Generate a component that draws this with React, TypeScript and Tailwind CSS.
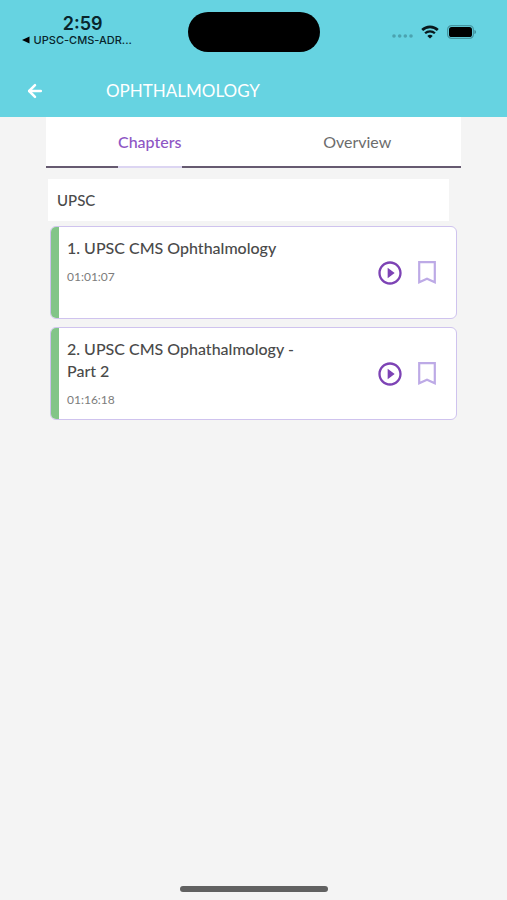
import React, { useState } from "react";
import { ArrowLeft } from "lucide-react";
import { MdPlayCircleOutline } from "react-icons/md";
import clsx from "clsx";

type Chapter = {
  id: number;
  title: string;
  duration: string;
};

const chapters: Chapter[] = [
  { id: 1, title: "UPSC CMS Ophthalmology", duration: "01:01:07" },
  { id: 2, title: "UPSC CMS Ophathalmology - Part 2", duration: "01:16:18" },
];

const tabs = ["Chapters", "Overview"];

const WifiIcon = () => (
  <svg viewBox="0 0 18 14" className="h-[14px] w-[18px]" fill="none">
    <path d="M1.2 5a11.200 11.200 0 0 1 15.600 0" stroke="#08191d" strokeWidth="2.7" />
    <path d="M4.1 8.300a7 7 0 0 1 9.800 0" stroke="#08191d" strokeWidth="2.3" />
    <path d="M9 13.6 6.300 11a3.900 3.900 0 0 1 5.400 0z" fill="#08191d" />
  </svg>
);

const BatteryIcon = () => (
  <svg viewBox="0 0 29 14" className="h-[14px] w-[29px]" fill="none">
    <rect x="0.6" y="0.6" width="25.800" height="12.8" rx="4" stroke="#4596a2" strokeWidth="1.2" />
    <rect x="2" y="2" width="23" height="10" rx="2.6" fill="#000" />
    <path d="M27.500 5v4c1-.3 1.300-1.100 1.300-2s-.3-1.700-1.300-2z" fill="#367f8a" />
  </svg>
);

const BookmarkIcon = () => (
  <svg viewBox="0 0 18 23" className="h-[23px] w-[18px]" fill="none">
    <path
      d="M1.200 1.200h15.600v20L9 17.800l-7.800 3.400z"
      stroke="#bdaae6"
      strokeWidth="2.2"
    />
  </svg>
);

const StatusBar = () => (
  <div className="grid h-16 grid-cols-[1fr_132px_1fr] pt-3">
    <div className="flex flex-col items-center pr-[34px] font-[Inter,sans-serif] text-[#08252c]">
      <span className="pl-3 text-[18px] leading-6 font-semibold">2:59</span>
      <a href="#" className="flex items-center gap-1 text-[11px] leading-2 font-medium">
        <svg viewBox="0 0 8 8" className="h-2 w-2" fill="#000">
          <path d="M0 4 7.500.5v7z" />
        </svg>
        UPSC-CMS-ADR...
      </a>
    </div>
    <div className="h-10 rounded-full bg-black" />
    <div className="flex h-10 items-center justify-end gap-2 pr-[31px]">
      <svg viewBox="0 0 21 4" className="mt-2 h-1 w-[21px]" fill="#4ba3b0">
        <circle cx="2" cy="2" r="1.800" />
        <circle cx="7.700" cy="2" r="1.800" />
        <circle cx="13.300" cy="2" r="1.800" />
        <circle cx="19" cy="2" r="1.800" />
      </svg>
      <WifiIcon />
      <BatteryIcon />
    </div>
  </div>
);

const ChapterCard = ({ id, title, duration }: Chapter) => {
  const [saved, setSaved] = useState(false);

  return (
    <li className="flex min-h-[93px] overflow-hidden rounded-md border border-[#cfc3ee] bg-white">
      <div className="w-2 shrink-0 bg-[#82c588]" />
      <div className="flex flex-1 flex-col gap-2 pt-[10px] pl-2">
        <h3 className="max-w-[240px] text-[16px] leading-[22px] font-medium text-[#4a4a4a]">
          {`${id}. ${title}`}
        </h3>
        <div className="text-[12px] leading-5 text-[#7c7c7c]">{duration}</div>
      </div>
      <div className="flex items-center gap-[14px] pr-5">
        <button type="button" aria-label={`Play ${title}`}>
          <MdPlayCircleOutline className="h-7 w-7 text-[#7d43b5]" />
        </button>
        <button
          type="button"
          aria-label={`Bookmark ${title}`}
          aria-pressed={saved}
          onClick={() => setSaved(!saved)}
        >
          <BookmarkIcon />
        </button>
      </div>
    </li>
  );
};

const App = () => {
  const [activeTab, setActiveTab] = useState("Chapters");

  return (
    <div className="flex min-h-screen flex-col bg-[#f4f4f4] font-[Lato,sans-serif]">
      <header className="bg-[#66d3e1]">
        <StatusBar />
        <div className="flex h-[53px] items-center gap-[61px] px-[25px] text-white">
          <button type="button" aria-label="Back">
            <ArrowLeft className="h-5 w-5" strokeWidth={3} />
          </button>
          <h1 className="text-[17px] leading-6">OPHTHALMOLOGY</h1>
        </div>
      </header>

      <main className="px-[46px]">
        <div className="grid h-[51px] grid-cols-2 bg-white">
          {tabs.map((tab) => (
            <button
              key={tab}
              type="button"
              onClick={() => setActiveTab(tab)}
              className={clsx(
                "flex justify-center border-b-2 border-[#665a70] text-[16px]",
                activeTab === tab ? "font-medium text-[#8e55c4]" : "text-[#6c6c6c]"
              )}
            >
              <span
                className={clsx(
                  "-mb-[2px] h-[51px] border-b-2 leading-[50px]",
                  activeTab === tab
                    ? "border-[#dcd5f2] bg-white"
                    : "border-transparent"
                )}
              >
                {tab}
              </span>
            </button>
          ))}
        </div>

        {activeTab === "Chapters" && (
          <section className="pt-[11px]">
            <h2 className="mr-3 ml-[2px] bg-white px-[9px] text-[15px] leading-[42px] font-medium text-[#4a4a4a]">
              UPSC
            </h2>
            <ul className="mt-[5px] mr-1 ml-1 flex flex-col gap-2">
              {chapters.map((chapter) => (
                <ChapterCard key={chapter.id} {...chapter} />
              ))}
            </ul>
          </section>
        )}
      </main>

      <footer className="mt-auto flex justify-center pb-2">
        <div className="h-[6px] w-[148px] rounded-full bg-[#616161]" />
      </footer>
    </div>
  );
};

export default App;
